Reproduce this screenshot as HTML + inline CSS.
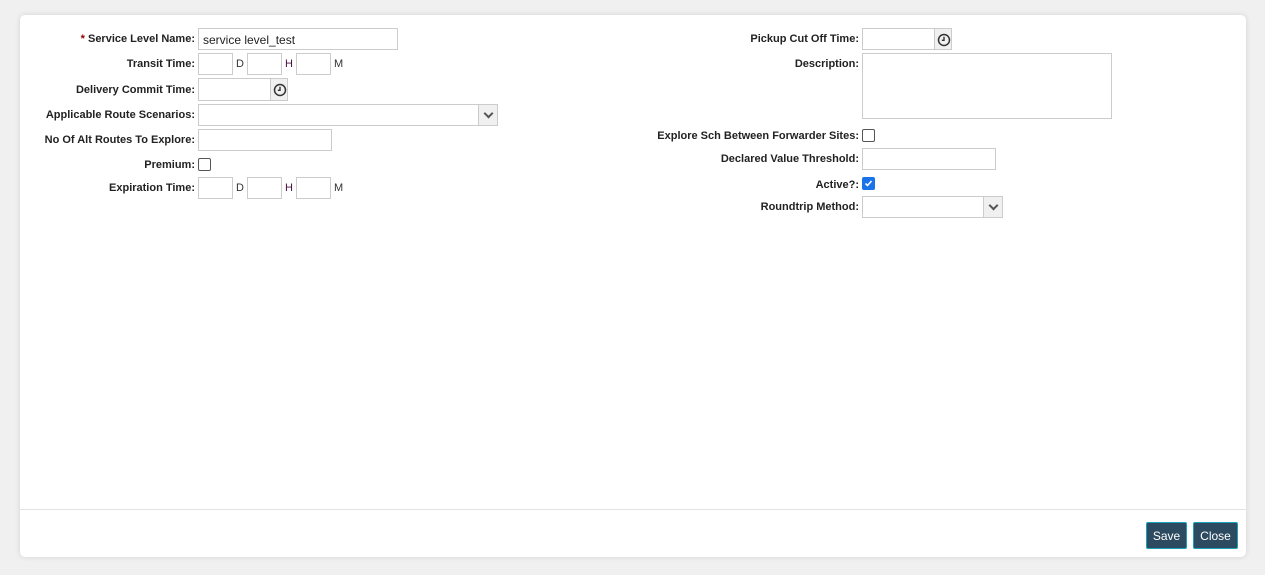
<!DOCTYPE html>
<html><head><style>
body{margin:0;width:1265px;height:575px;background:#f0f0f0;font-family:"Liberation Sans",sans-serif;position:relative;overflow:hidden}
.card{position:absolute;left:20px;top:15px;width:1226px;height:542px;background:#fff;border-radius:5px;box-shadow:0 0 6px rgba(0,0,0,.12)}
.sep{position:absolute;left:20px;top:509px;width:1226px;height:1px;background:#e3e3e3}
.l{position:absolute;font-size:11px;font-weight:bold;color:#222;text-align:right;white-space:nowrap;margin-top:1px}
.l.a{right:1070px}.l.b{right:406px}
.i{position:absolute;border:1px solid #ccc;box-sizing:border-box;background:#fff;font-size:12px;color:#222;padding:4px 4px 2px}
.u{position:absolute;font-size:11px;color:#333;margin-top:1px}
.clk{position:absolute;box-sizing:border-box;border:1px solid #ccc;border-left:none;background:#f0f0f0}
.clk svg{position:absolute;left:2px;top:4px}
.arr{position:absolute;top:0;right:0;width:19px;height:100%;background:#f0f0f0;border-left:1px solid #ccc;box-sizing:border-box}
.arr:after{content:"";position:absolute;left:6px;top:5px;width:5px;height:5px;border-right:2px solid #555;border-bottom:2px solid #555;transform:rotate(45deg)}
.cb{position:absolute;width:13px;height:13px;box-sizing:border-box;border:1px solid #555;border-radius:2px;background:#fff}
.btn{position:absolute;top:522px;height:27px;background:#2c4a60;border:1px solid #1aa0b8;box-sizing:border-box;color:#fff;font-size:12px;text-align:center;line-height:27px;border-radius:2px}
</style></head><body>
<div class="card"></div><div class="sep"></div>

<div class="l a" style="top:32px"><span style="color:#8b0000">*</span> Service Level Name:</div>
<div class="i" style="left:198px;top:28px;width:200px;height:22px">service level_test</div>

<div class="l a" style="top:57px">Transit Time:</div>
<div class="i" style="left:198px;top:53px;width:35px;height:22px"></div><div class="u" style="left:236px;top:57px">D</div>
<div class="i" style="left:247px;top:53px;width:35px;height:22px"></div><div class="u" style="left:285px;top:57px;color:#4a1040">H</div>
<div class="i" style="left:296px;top:53px;width:35px;height:22px"></div><div class="u" style="left:334px;top:57px">M</div>

<div class="l a" style="top:83px">Delivery Commit Time:</div>
<div class="i" style="left:198px;top:78px;width:73px;height:23px"></div><div class="clk" style="left:271px;top:78px;width:17px;height:23px"><svg width="14" height="14" viewBox="0 0 14 14"><circle cx="7" cy="7" r="5.5" stroke="#333" stroke-width="1.5" fill="none"/><path d="M7 3.8V7.3H4.8" stroke="#333" stroke-width="1.4" fill="none"/></svg></div>

<div class="l a" style="top:108px">Applicable Route Scenarios:</div>
<div class="i" style="left:198px;top:104px;width:300px;height:22px;padding:0"><div class="arr"></div></div>

<div class="l a" style="top:133px">No Of Alt Routes To Explore:</div>
<div class="i" style="left:198px;top:129px;width:134px;height:22px"></div>

<div class="l a" style="top:158px">Premium:</div>
<div class="cb" style="left:198px;top:158px"></div>

<div class="l a" style="top:181px">Expiration Time:</div>
<div class="i" style="left:198px;top:177px;width:35px;height:22px"></div><div class="u" style="left:236px;top:181px">D</div>
<div class="i" style="left:247px;top:177px;width:35px;height:22px"></div><div class="u" style="left:285px;top:181px;color:#4a1040">H</div>
<div class="i" style="left:296px;top:177px;width:35px;height:22px"></div><div class="u" style="left:334px;top:181px">M</div>

<div class="l b" style="top:32px">Pickup Cut Off Time:</div>
<div class="i" style="left:862px;top:28px;width:73px;height:22px"></div><div class="clk" style="left:935px;top:28px;width:17px;height:22px"><svg width="14" height="14" viewBox="0 0 14 14"><circle cx="7" cy="7" r="5.5" stroke="#333" stroke-width="1.5" fill="none"/><path d="M7 3.8V7.3H4.8" stroke="#333" stroke-width="1.4" fill="none"/></svg></div>

<div class="l b" style="top:57px">Description:</div>
<div class="i" style="left:862px;top:53px;width:250px;height:66px"></div>

<div class="l b" style="top:129px">Explore Sch Between Forwarder Sites:</div>
<div class="cb" style="left:862px;top:129px"></div>

<div class="l b" style="top:152px">Declared Value Threshold:</div>
<div class="i" style="left:862px;top:148px;width:134px;height:22px"></div>

<div class="l b" style="top:178px">Active?:</div>
<div class="cb" style="left:862px;top:177px;background:#1a73e8;border-color:#1a73e8"><svg width="11" height="11" viewBox="0 0 11 11" style="position:absolute;left:0;top:0"><path d="M2.5 5.5 L4.5 7.5 L8.5 3" stroke="#fff" stroke-width="1.6" fill="none"/></svg></div>

<div class="l b" style="top:200px">Roundtrip Method:</div>
<div class="i" style="left:862px;top:196px;width:141px;height:22px;padding:0"><div class="arr"></div></div>

<div class="btn" style="left:1146px;width:41px">Save</div>
<div class="btn" style="left:1193px;width:45px">Close</div>
</body></html>
